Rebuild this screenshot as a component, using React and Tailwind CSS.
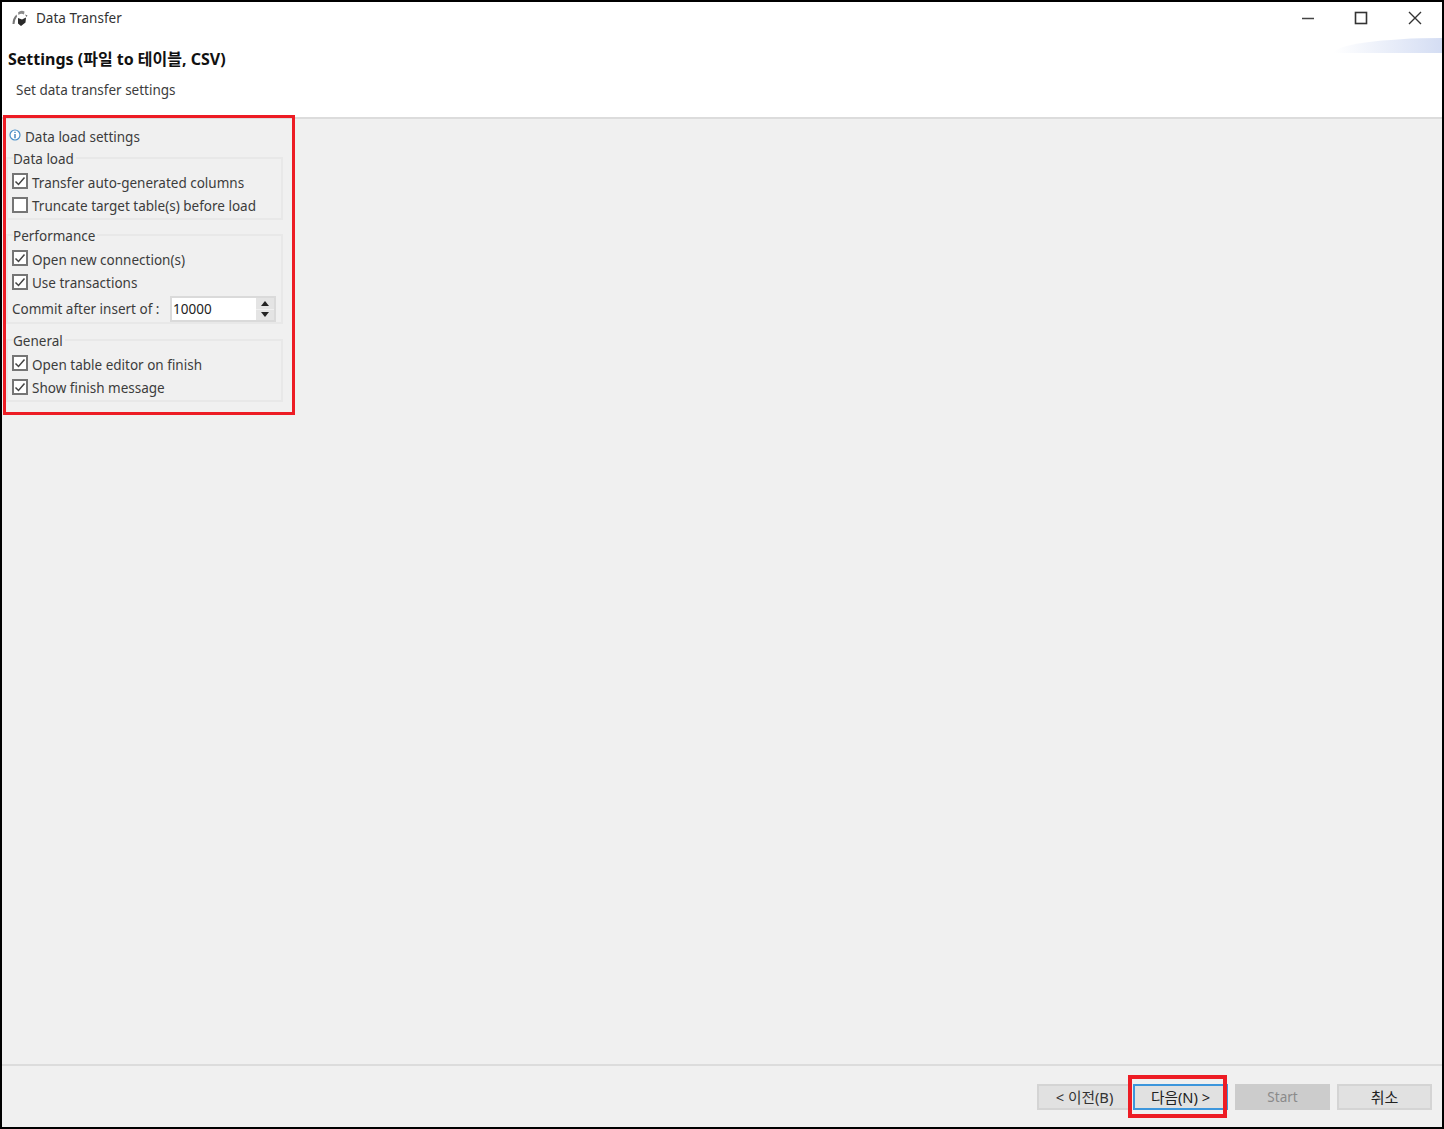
function Check({ checked, label }) {
  return (
    <div className="flex items-center h-[23.5px] pl-[4px]">
      <span className="w-[16px] h-[16px] border-2 border-[#757575] bg-white flex items-center justify-center shrink-0 -mt-[3px]">
        {checked && (
          <svg width="12" height="12" viewBox="0 0 12 12" fill="none">
            <path d="M1.5 6.5 L4.5 9.5 L10.5 2.5" stroke="#444" strokeWidth="1.5" />
          </svg>
        )}
      </span>
      <span className="ml-[4px]">{label}</span>
    </div>
  );
}

function Group({ title, children, cls }) {
  return (
    <div className={"border-2 border-[#e8e8e8] w-[277px] ml-[4px] " + cls}>
      <div className="h-[20px] -mt-[10px] leading-[20px] pl-[5px]">
        <span className="bg-[#f0f0f0] pr-[2px]">{title}</span>
      </div>
      <div className="mt-[2px]">{children}</div>
    </div>
  );
}

function Btn({ children, cls }) {
  return (
    <div className={"w-[95px] h-[26px] flex items-center justify-center border-2 " + cls}>{children}</div>
  );
}

export default function App() {
  return (
    <div className="relative w-[1444px] h-[1129px] border-2 border-black bg-[#f0f0f0] flex flex-col text-[13.5px] leading-[20px] text-[#3c3c3c] overflow-hidden font-['Noto_Sans','Noto_Sans_CJK_KR',sans-serif]">
      <div className="relative h-[117px] bg-white border-b-2 border-[#dcdcdc] shrink-0">
        <div className="flex items-center h-[32px] pl-[9px]">
          <svg width="18" height="18" viewBox="0 0 18 18">
            <path d="M1.5 15 Q1.5 9 5.5 5.5 L6 7.5 Q4 10 3.5 15 Z" fill="#777" />
            <path d="M7 3.5 Q10 0.5 13.5 2.5 L13 5.5 Q10 4 7.5 6 Z" fill="#8a8a8a" />
            <path d="M7 9 L11 10.5 L15 8.5 L14.5 13.5 L10 17 L7 14.5 Z" fill="#2a2a2a" />
            <path d="M14 5.5 L16.5 6.5 L15.5 8 Z" fill="#666" />
          </svg>
          <span className="ml-[7px] text-[#333]">Data Transfer</span>
          <div className="ml-auto flex items-center text-[#222]">
            <svg width="14" height="14" viewBox="0 0 14 14" className="mr-[39px]"><path d="M1 7.5 H13" stroke="#444" strokeWidth="1.5" /></svg>
            <svg width="14" height="14" viewBox="0 0 14 14" className="mr-[40px]"><rect x="1.5" y="1.5" width="11" height="11" fill="none" stroke="#333" strokeWidth="1.6" /></svg>
            <svg width="14" height="14" viewBox="0 0 14 14" className="mr-[20px]"><path d="M1 1 L13 13 M13 1 L1 13" stroke="#333" strokeWidth="1.4" /></svg>
          </div>
        </div>
        <div className="pl-[6px] mt-[15px] font-bold text-[#111] text-[16px] leading-[20px]">Settings (파일 to 테이블, CSV)</div>
        <div className="pl-[14px] mt-[11px]">Set data transfer settings</div>
        <div className="absolute right-0 top-[36px] w-[108px] h-[15px] bg-gradient-to-r from-white to-[#d4ddf3] rounded-tl-[100%]" />
      </div>

      <div className="flex-1 pt-[8px]">
        <div className="flex items-center h-[20px] pl-[7px]">
          <svg width="12" height="12" viewBox="0 0 12 12" className="-mt-[4px]">
            <circle cx="6" cy="6" r="5" fill="#fff" stroke="#4a90c8" strokeWidth="1.2" />
            <path d="M6 2.8 V4 M6 5 V9.2" stroke="#2f78b5" strokeWidth="1.3" />
          </svg>
          <span className="ml-[4px]">Data load settings</span>
        </div>
        <Group title="Data load" cls="mt-[10px]">
          <Check checked label="Transfer auto-generated columns" />
          <Check label="Truncate target table(s) before load" />
        </Group>
        <Group title="Performance" cls="mt-[14px]">
          <Check checked label="Open new connection(s)" />
          <Check checked label="Use transactions" />
          <div className="flex items-center h-[26px] pl-[4px] mt-[1px]">
            <span className="w-[158px] whitespace-pre">Commit after insert of :</span>
            <div className="w-[106px] h-[26px] border-2 border-[#dadada] flex">
              <div className="flex-1 bg-white pl-[1px] leading-[22px] text-[#222]">10000</div>
              <div className="w-[18px] flex flex-col gap-[1px] bg-[#f0f0f0]">
                <div className="flex-1 bg-[#e4e4e4] flex items-center justify-center">
                  <svg width="8" height="5" viewBox="0 0 8 5"><path d="M4 0 L8 5 H0 Z" fill="#222" /></svg>
                </div>
                <div className="flex-1 bg-[#e4e4e4] flex items-center justify-center">
                  <svg width="8" height="5" viewBox="0 0 8 5"><path d="M0 0 H8 L4 5 Z" fill="#222" /></svg>
                </div>
              </div>
            </div>
          </div>
        </Group>
        <Group title="General" cls="mt-[15px]">
          <Check checked label="Open table editor on finish" />
          <Check checked label="Show finish message" />
        </Group>
      </div>

      <div className="h-[63px] border-t-2 border-[#dcdcdc] shrink-0 flex items-start justify-end pt-[18px] pr-[10px] gap-[7px]">
        <Btn cls="bg-[#e1e1e1] border-[#d4d4d4] text-[#333] mr-[-6px] text-[14.7px]">&lt; 이전(B)</Btn>
        <Btn cls="bg-[#e1e1e1] border-[#3d96dc] text-[#222] text-[14.7px]">다음(N) &gt;</Btn>
        <Btn cls="bg-[#cccccc] border-[#cccccc] text-[#8a8a8a] text-[13.5px]">Start</Btn>
        <Btn cls="bg-[#e1e1e1] border-[#d4d4d4] text-[#222] text-[15px]">취소</Btn>
      </div>

      <div className="absolute left-[1px] top-[113px] w-[292px] h-[300px] border-[3px] border-[#ed1c24] pointer-events-none" />
      <div className="absolute left-[1126px] top-[1073px] w-[99px] h-[43px] border-4 border-[#ed1c24] pointer-events-none" />
    </div>
  );
}
